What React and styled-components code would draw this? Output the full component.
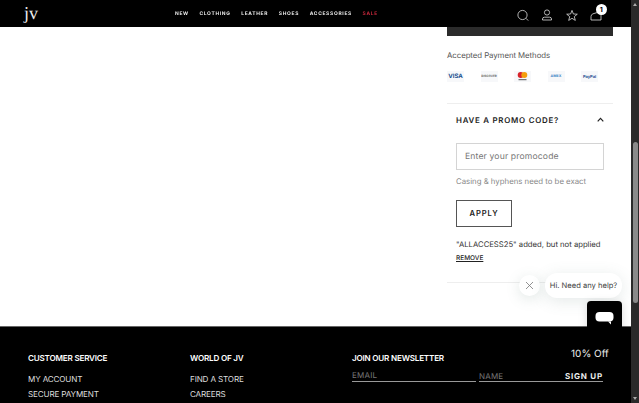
import React from 'react';
import styled, { createGlobalStyle } from 'styled-components';

const GlobalStyle = createGlobalStyle`
  html, body {
    margin: 0;
    padding: 0;
    height: 403px;
    overflow: hidden;
    background: #fff;
    font-family: Inter, "Liberation Sans", sans-serif;
    text-rendering: geometricPrecision;
  }
`;

const Window = styled.div`
  display: flex;
  width: 639px;
  height: 403px;
  overflow: hidden;
  position: relative;
`;

const Page = styled.div`
  width: 631px;
  height: 403px;
  display: flex;
  flex-direction: column;
  flex-shrink: 0;
`;

const Header = styled.header`
  height: 27px;
  background: #000;
  display: flex;
  align-items: center;
  flex-shrink: 0;
  position: relative;
`;

const Logo = styled.div`
  font-family: "Liberation Serif", serif;
  font-size: 18px;
  color: #eee;
  margin-left: 24px;
  width: 151px;
  line-height: 27px;
`;

const Nav = styled.nav`
  display: flex;
  gap: 10.6px;
  will-change: transform;
`;

const NavLink = styled.a`
  font-size: 4.9px;
  font-weight: 700;
  letter-spacing: 0.7px;
  color: ${props => (props.$sale ? '#c8283c' : '#eee')};
`;

const Icons = styled.div`
  position: absolute;
  left: 516px;
  top: 6px;
  display: flex;
  gap: 10.4px;
  align-items: center;
`;

const IconWrap = styled.div`
  position: relative;
  width: 14px;
  height: 14px;
`;

const Badge = styled.span`
  position: absolute;
  top: -2.5px;
  right: -3.5px;
  width: 11px;
  height: 11px;
  border-radius: 50%;
  background: #fff;
  color: #000;
  font-size: 7px;
  font-weight: 700;
  display: flex;
  align-items: center;
  justify-content: center;
`;

const Main = styled.main`
  height: 299px;
  flex-shrink: 0;
  display: flex;
  justify-content: flex-end;
  padding-right: 18px;
  background: #fff;
`;

const Summary = styled.section`
  width: 166px;
`;

const CheckoutBar = styled.div`
  height: 9px;
  background: #2b2b2b;
`;

const PaymentTitle = styled.div`
  font-size: 7.8px;
  letter-spacing: -0.05px;
  color: #555;
  margin-top: 14px;
  line-height: 11px;
`;

const Cards = styled.div`
  display: flex;
  gap: 16.5px;
  margin-top: 8px;
  height: 14px;
  align-items: center;
`;

const PayCard = styled.div`
  width: 17px;
  height: 11px;
  background: #f7f8fa;
  display: flex;
  align-items: center;
  justify-content: center;
  font-size: ${props => props.$size || 5}px;
  font-weight: 700;
  color: ${props => props.$color || '#1a4f8f'};
  white-space: nowrap;
  overflow: hidden;
`;

const Promo = styled.div`
  margin-top: 20px;
  border-top: 1px solid #eee;
  border-bottom: 1px solid #eee;
  padding: 0 9px;
  height: 180px;
  box-sizing: border-box;
`;

const PromoHead = styled.div`
  display: flex;
  justify-content: space-between;
  align-items: center;
  height: 31px;
  font-size: 7.9px;
  font-weight: 600;
  letter-spacing: 0.75px;
  color: #222;
`;

const PromoField = styled.div`
  width: 148px;
  height: 27px;
  box-sizing: border-box;
  border: 1px solid #d4d4d4;
  margin-top: 8px;
  padding-left: 8px;
  display: flex;
  align-items: center;
  font-size: 8.6px;
  letter-spacing: 0.15px;
  color: #777;
`;

const Hint = styled.div`
  font-size: 7.8px;
  color: #888;
  margin-top: 6px;
  line-height: 10px;
`;

const ApplyButton = styled.button`
  display: block;
  width: 56px;
  height: 27px;
  margin-top: 14px;
  padding: 0;
  background: #fff;
  border: 1px solid #555;
  font-family: inherit;
  font-size: 7.6px;
  font-weight: 600;
  letter-spacing: 0.9px;
  color: #222;
`;

const Applied = styled.div`
  font-size: 7.7px;
  color: #333;
  margin-top: 13px;
  line-height: 10px;
  white-space: nowrap;
`;

const Remove = styled.a`
  display: block;
  font-size: 6.5px;
  font-weight: 500;
  color: #222;
  text-decoration: underline;
  margin-top: 3px;
  line-height: 10px;
`;

const Footer = styled.footer`
  flex: 1;
  background: #000;
  border-top: 1px solid #666;
  box-sizing: border-box;
  display: flex;
  padding: 26px 0 0 28px;
  color: #eee;
  position: relative;
`;

const FooterCol = styled.div`
  width: 162px;
  flex-shrink: 0;
`;

const FooterTitle = styled.div`
  font-size: 8.1px;
  font-weight: 600;
  letter-spacing: -0.2px;
  line-height: 11px;
  color: #fff;
`;

const FooterLink = styled.a`
  display: block;
  font-size: 8.1px;
  letter-spacing: -0.15px;
  line-height: 15px;
  color: #ddd;
  margin-top: ${props => (props.$first ? '8px' : '0')};
`;

const Newsletter = styled.div`
  width: 251px;
  flex-shrink: 0;
`;

const SignupRow = styled.div`
  display: flex;
  gap: 3px;
  margin-top: 6px;
`;

const SignupField = styled.div`
  width: 124px;
  border-bottom: 1px solid #999;
  font-size: 8px;
  letter-spacing: 0.2px;
  line-height: 11px;
  height: 11px;
  color: #777;
`;

const SignupGroup = styled.div`
  flex: 1;
  display: flex;
  justify-content: space-between;
  align-items: center;
  border-bottom: 1px solid #999;
  font-size: 8px;
  letter-spacing: 0.2px;
  height: 11px;
  color: #777;
`;

const SignupSubmit = styled.span`
  font-weight: 700;
  letter-spacing: 0.8px;
  color: #eee;
`;

const TenOff = styled.div`
  position: absolute;
  left: 571px;
  top: 21px;
  font-size: 10px;
  color: #eee;
  white-space: nowrap;
`;

const Scrollbar = styled.div`
  width: 8px;
  height: 403px;
  background: #2a2a2a;
  position: relative;
  flex-shrink: 0;
`;

const ScrollThumb = styled.div`
  position: absolute;
  left: 1.5px;
  right: 1.5px;
  top: 142px;
  height: 161px;
  border-radius: 3px;
  background: #8a8a8a;
`;

const ScrollArrow = styled.div`
  position: absolute;
  left: 1.5px;
  ${props => (props.$down ? 'bottom: 3px;' : 'top: 3px;')}
  width: 0;
  height: 0;
  border-left: 2.5px solid transparent;
  border-right: 2.5px solid transparent;
  ${props => (props.$down ? 'border-top: 3px solid #aaa;' : 'border-bottom: 3px solid #aaa;')}
`;

const CloseChat = styled.div`
  position: absolute;
  left: 519px;
  top: 275px;
  width: 21px;
  height: 21px;
  border-radius: 50%;
  background: #fff;
  box-shadow: 0 3px 14px rgba(90, 120, 110, 0.18);
  display: flex;
  align-items: center;
  justify-content: center;
`;

const ChatBubble = styled.div`
  position: absolute;
  left: 545px;
  top: 273px;
  width: 77px;
  height: 25px;
  border-radius: 12px;
  background: #fff;
  box-shadow: 0 3px 16px rgba(90, 120, 110, 0.16);
  display: flex;
  align-items: center;
  justify-content: center;
  font-size: 7.6px;
  color: #444;
  white-space: nowrap;
`;

const ChatButton = styled.div`
  position: absolute;
  left: 587px;
  top: 301px;
  width: 35px;
  height: 35px;
  border-radius: 4px;
  background: #000;
  box-shadow: 0 2px 10px rgba(0, 0, 0, 0.15);
  display: flex;
  align-items: center;
  justify-content: center;
`;

const navItems = ['NEW', 'CLOTHING', 'LEATHER', 'SHOES', 'ACCESSORIES'];

const App = () => (
  <Window>
    <GlobalStyle />
    <Page>
      <Header>
        <Logo>jv</Logo>
        <Nav>
          {navItems.map(item => <NavLink key={item}>{item}</NavLink>)}
          <NavLink $sale>SALE</NavLink>
        </Nav>
        <Icons>
          <IconWrap>
            <svg width="14" height="14" viewBox="0 0 14 14" fill="none" stroke="#ddd" strokeWidth="0.8">
              <circle cx="6.5" cy="7" r="4.6" />
              <path d="M10 10.3 L12.2 12.6" />
            </svg>
          </IconWrap>
          <IconWrap>
            <svg width="14" height="14" viewBox="0 0 14 14" fill="none" stroke="#ddd" strokeWidth="0.8">
              <circle cx="7" cy="4.5" r="2.6" />
              <path d="M2.5 12 V11 Q2.5 9.2 4.5 9.2 H9.5 Q11.5 9.2 11.5 11 V12 Z" />
            </svg>
          </IconWrap>
          <IconWrap>
            <svg width="14" height="14" viewBox="0 0 14 14" fill="none" stroke="#ddd" strokeWidth="0.8">
              <path d="M7 2.4 L8.4 6 L12.3 6.2 L9.3 8.6 L10.3 12.4 L7 10.3 L3.7 12.4 L4.7 8.6 L1.7 6.2 L5.6 6 Z" />
            </svg>
          </IconWrap>
          <IconWrap>
            <svg width="14" height="14" viewBox="0 0 14 14" fill="none" stroke="#ddd" strokeWidth="0.8">
              <path d="M2 12 V8.5 Q2 6.5 4 5.8 L8 4.6 H12 V12 Z" />
            </svg>
            <Badge>1</Badge>
          </IconWrap>
        </Icons>
      </Header>
      <Main>
        <Summary>
          <CheckoutBar />
          <PaymentTitle>Accepted Payment Methods</PaymentTitle>
          <Cards>
            <PayCard $size={6}>VISA</PayCard>
            <PayCard $size={3} $color="#666">DISCOVER</PayCard>
            <PayCard>
              <svg width="13" height="11" viewBox="0 0 13 11">
                <circle cx="4.7" cy="4" r="3" fill="#d8232a" />
                <circle cx="8.3" cy="4" r="3" fill="#f59e0b" />
                <rect x="2.5" y="8.2" width="8" height="1" fill="#555" />
              </svg>
            </PayCard>
            <PayCard $size={3.6} $color="#3f86c6">AMEX</PayCard>
            <PayCard $size={4}>PayPal</PayCard>
          </Cards>
          <Promo>
            <PromoHead>
              HAVE A PROMO CODE?
              <svg width="7" height="5" viewBox="0 0 7 5" fill="none" stroke="#222" strokeWidth="1.2">
                <path d="M0.7 4.3 L3.5 1.3 L6.3 4.3" />
              </svg>
            </PromoHead>
            <PromoField>Enter your promocode</PromoField>
            <Hint>Casing &amp; hyphens need to be exact</Hint>
            <ApplyButton>APPLY</ApplyButton>
            <Applied>"ALLACCESS25" added, but not applied</Applied>
            <Remove>REMOVE</Remove>
          </Promo>
        </Summary>
      </Main>
      <Footer>
        <FooterCol>
          <FooterTitle>CUSTOMER SERVICE</FooterTitle>
          <FooterLink $first>MY ACCOUNT</FooterLink>
          <FooterLink>SECURE PAYMENT</FooterLink>
        </FooterCol>
        <FooterCol>
          <FooterTitle>WORLD OF JV</FooterTitle>
          <FooterLink $first>FIND A STORE</FooterLink>
          <FooterLink>CAREERS</FooterLink>
        </FooterCol>
        <Newsletter>
          <FooterTitle>JOIN OUR NEWSLETTER</FooterTitle>
          <SignupRow>
            <SignupField>EMAIL</SignupField>
            <SignupGroup>
              NAME
              <SignupSubmit>SIGN UP</SignupSubmit>
            </SignupGroup>
          </SignupRow>
        </Newsletter>
        <TenOff>10% Off</TenOff>
      </Footer>
    </Page>
    <Scrollbar>
      <ScrollArrow />
      <ScrollThumb />
      <ScrollArrow $down />
    </Scrollbar>
    <CloseChat>
      <svg width="9" height="9" viewBox="0 0 9 9" stroke="#777" strokeWidth="0.8">
        <path d="M1 1 L8 8 M8 1 L1 8" />
      </svg>
    </CloseChat>
    <ChatBubble>Hi. Need any help?</ChatBubble>
    <ChatButton>
      <svg width="19" height="15" viewBox="0 0 19 15">
        <rect x="0.5" y="1" width="18" height="9.5" rx="4" fill="#fff" />
        <path d="M13 10.5 L16 10.5 L16 13.5 Z" fill="#fff" />
      </svg>
    </ChatButton>
  </Window>
);

export default App;
